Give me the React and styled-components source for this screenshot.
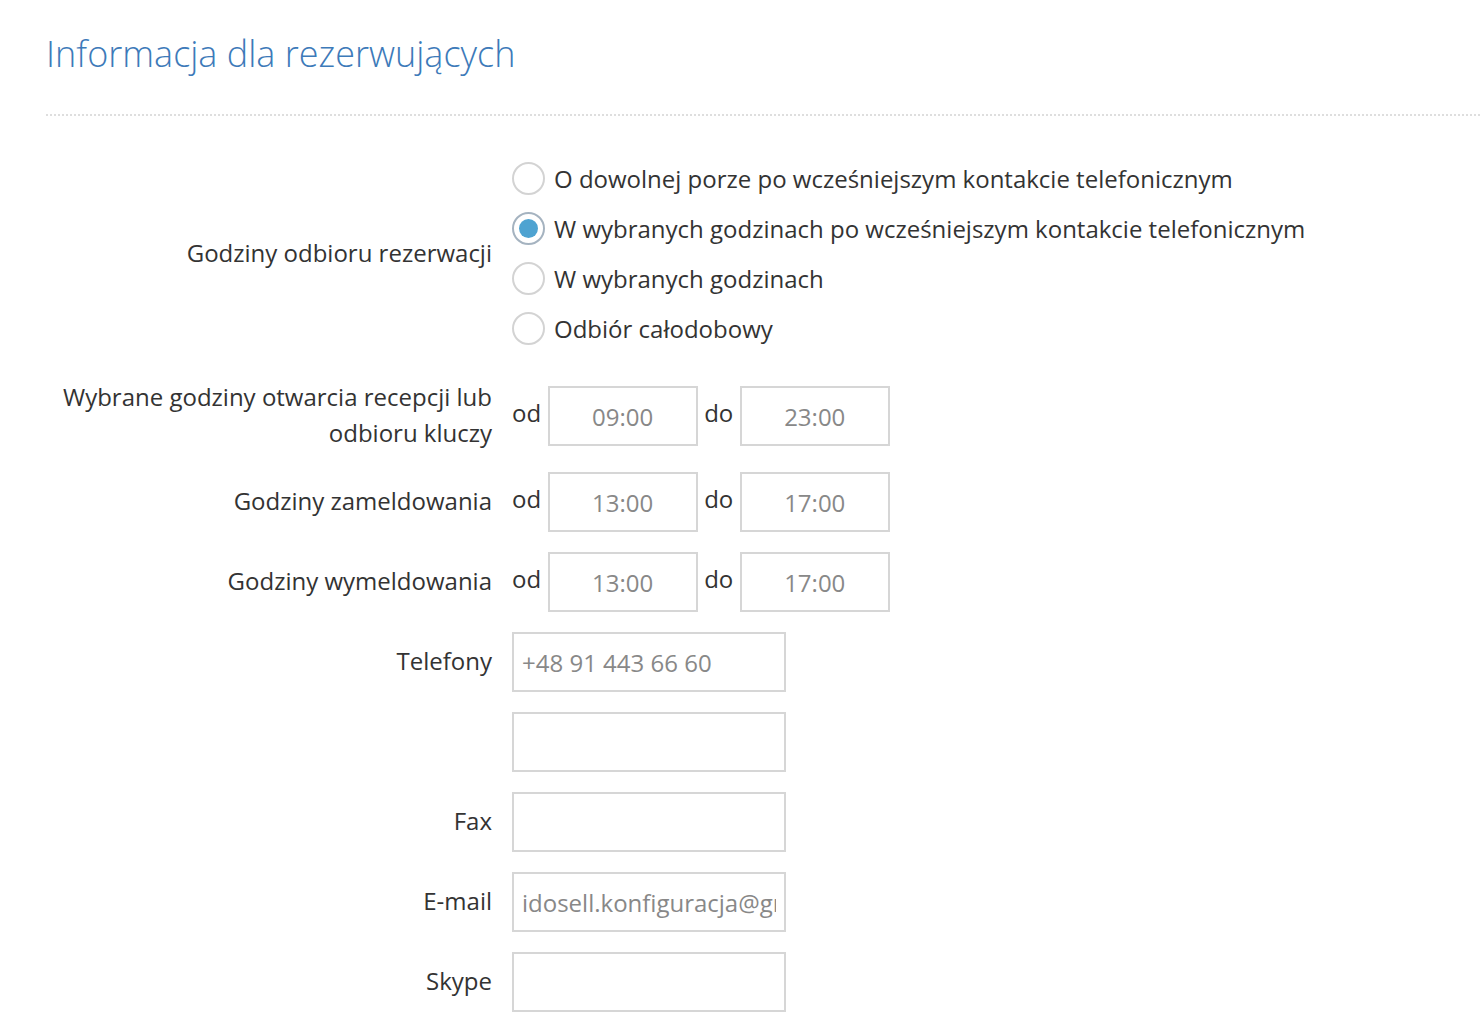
import React from "react";
import styled, { createGlobalStyle } from "styled-components";

const Global = createGlobalStyle`
  html, body { margin: 0; padding: 0; background: #fff; }
  body { font-family: "Open Sans", "Liberation Sans", sans-serif; color: #333; }
  * { box-sizing: border-box; }
`;

const Page = styled.div`
  padding: 30px 0 0 46px;
  width: 1480px;
`;

const Title = styled.h1`
  margin: 0;
  font-family: "Open Sans", sans-serif;
  font-weight: 300;
  font-size: 36px;
  line-height: 48px;
  color: #3d7ab9;
`;

const Divider = styled.div`
  margin-top: 36px;
  border-top: 2px dotted #dedede;
`;

const Form = styled.div`
  display: flex;
  flex-direction: column;
  gap: 20px;
  padding-top: 38px;
`;

const Row = styled.div`
  display: grid;
  grid-template-columns: 446px 1fr;
  column-gap: 20px;
  align-items: center;
  margin-bottom: ${(p) => p.$extra || 0}px;
`;

const Label = styled.div`
  text-align: right;
  font-size: 24px;
  line-height: 36px;
  color: #333;
  transform: translateY(-1px);
`;

const RadioList = styled.div`
  display: flex;
  flex-direction: column;
`;

const RadioRow = styled.label`
  display: flex;
  align-items: center;
  gap: 9px;
  height: 50px;
  font-size: 24px;
  color: #333;
  cursor: pointer;
  padding-bottom: 1px;
`;

const RadioDot = styled.span`
  width: 33px;
  height: 33px;
  border-radius: 50%;
  border: 2px solid ${(p) => (p.$checked ? "#a5b3c0" : "#d3d3d3")};
  background: #fff;
  display: flex;
  align-items: center;
  justify-content: center;
  flex-shrink: 0;
  &::after {
    content: "";
    width: 19px;
    height: 19px;
    border-radius: 50%;
    background: ${(p) => (p.$checked ? "#4ea3d1" : "transparent")};
  }
`;

const TimeGroup = styled.div`
  display: flex;
  align-items: center;
  gap: 6.5px;
`;

const Word = styled.span`
  font-size: 24px;
  line-height: 35px;
  color: #333;
  margin-bottom: 7px;
`;

const TimeInput = styled.input`
  width: 150px;
  height: 60px;
  border: 2px solid #d6d6d6;
  background: #fff;
  font-family: "Open Sans", sans-serif;
  font-size: 24px;
  color: #888;
  text-align: center;
  padding: 1px 0 0;
  outline: none;
`;

const TextInput = styled.input`
  width: 274px;
  height: 60px;
  border: 2px solid #d6d6d6;
  background: #fff;
  font-family: "Open Sans", sans-serif;
  font-size: 24px;
  color: #888;
  padding: 0 8px;
  outline: none;
`;

const radios = [
  "O dowolnej porze po wcześniejszym kontakcie telefonicznym",
  "W wybranych godzinach po wcześniejszym kontakcie telefonicznym",
  "W wybranych godzinach",
  "Odbiór całodobowy",
];

const times = [
  { label: ["Wybrane godziny otwarcia recepcji lub", "odbioru kluczy"], from: "09:00", to: "23:00" },
  { label: ["Godziny zameldowania"], from: "13:00", to: "17:00" },
  { label: ["Godziny wymeldowania"], from: "13:00", to: "17:00" },
];

const fields = [
  { label: "Telefony", value: "+48 91 443 66 60" },
  { label: "", value: "" },
  { label: "Fax", value: "" },
  { label: "E-mail", value: "idosell.konfiguracja@gmail.com" },
  { label: "Skype", value: "" },
];

export default function App() {
  return (
    <Page>
      <Global />
      <Title>Informacja dla rezerwujących</Title>
      <Divider />
      <Form>
        <Row $extra={6}>
          <Label>Godziny odbioru rezerwacji</Label>
          <RadioList>
            {radios.map((r, i) => (
              <RadioRow key={r}>
                <RadioDot $checked={i === 1} />
                {r}
              </RadioRow>
            ))}
          </RadioList>
        </Row>
        {times.map((t, i) => (
          <Row key={i}>
            <Label>
              {t.label.map((l, j) => (
                <div key={j}>{l}</div>
              ))}
            </Label>
            <TimeGroup>
              <Word>od</Word>
              <TimeInput defaultValue={t.from} />
              <Word>do</Word>
              <TimeInput defaultValue={t.to} />
            </TimeGroup>
          </Row>
        ))}
        {fields.map((f, i) => (
          <Row key={i}>
            <Label>{f.label}</Label>
            <div>
              <TextInput defaultValue={f.value} />
            </div>
          </Row>
        ))}
      </Form>
    </Page>
  );
}
